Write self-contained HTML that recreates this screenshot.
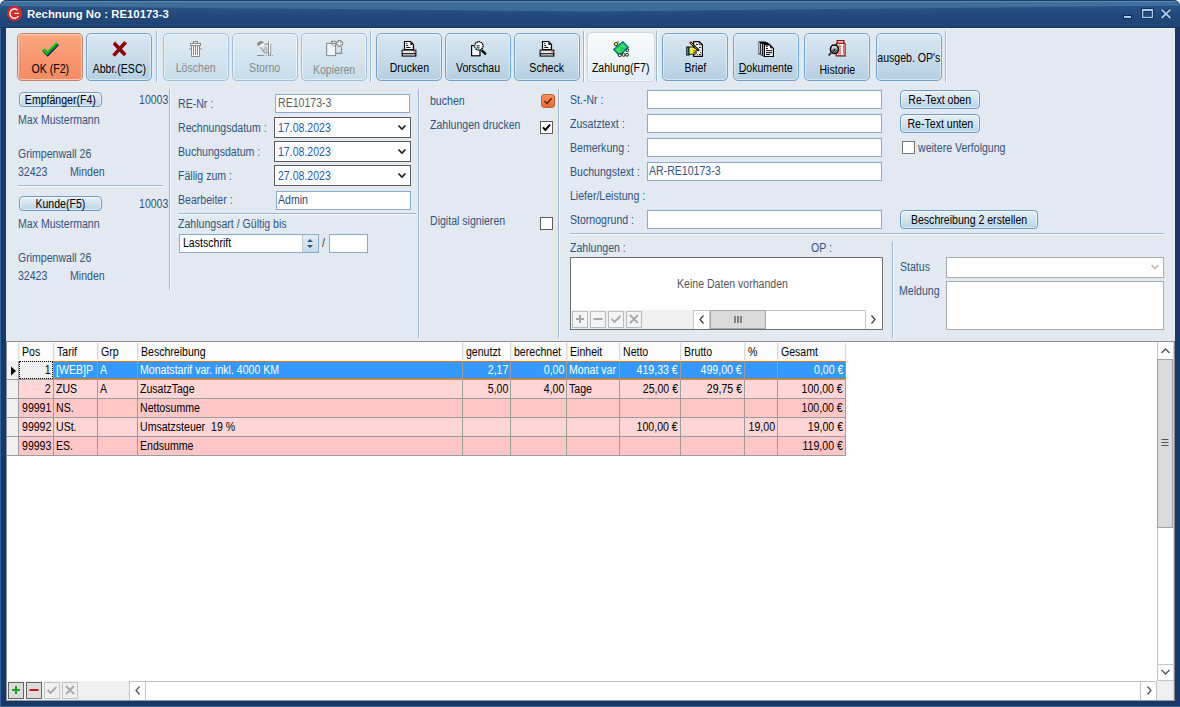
<!DOCTYPE html>
<html><head><meta charset="utf-8"><style>
*{margin:0;padding:0;box-sizing:border-box}
html{background:#fff}body{width:1180px;height:707px;overflow:hidden;background:#1a3866;border-radius:6px 6px 0 0}
body{position:relative;font-family:"Liberation Sans",sans-serif;font-size:11px;line-height:13px;color:#000}
.a{position:absolute}
.t{position:absolute;white-space:nowrap;font-size:12px;line-height:13px;transform:scaleX(.88);transform-origin:0 0}
.tr{transform-origin:100% 0}
.sx{display:inline-block;transform:scaleX(.88);white-space:nowrap}
.lb{color:#30547f}
#title{left:0;top:0;width:1180px;height:28px;background:linear-gradient(#1c3c6a 0,#1c3c6a 1px,#2d598b 1px,#22497c 16px,#1e4374 27px,#143562 27px);border-radius:6px 6px 0 0}
#glass{left:0;top:1px;width:1180px;height:11px;background:linear-gradient(#5b8ab6 0,#5b8ab6 1px,#416f9d 1px,#3b6a9c 10px);clip-path:polygon(0 0,100% 0,100% 4.6px,50% 10.5px,0 5px);border-radius:6px 6px 0 0}
.tb.ok{border-color:#c48068;background:linear-gradient(#fba880,#f99872 50%,#f48b62)}
.tb.hot{top:32px;height:50px;width:68px;border-color:#c9dae6;background:linear-gradient(#f8fbfc,#eef4f8 50%,#e2ecf3)}
#client{left:6px;top:28px;width:1169px;height:673px;background:#e2e9f1;border-top:1px solid #eef2f7}
.tb{position:absolute;top:33px;width:66px;height:48px;border:1px solid #72a0c7;border-radius:5px;background:linear-gradient(#d9e8f2,#c9dcea 50%,#b4cfe3);box-shadow:inset 0 0 0 1px rgba(255,255,255,.5)}
.tb .cap{position:absolute;left:-4px;right:-4px;top:27px;text-align:center;color:#000;font-size:12px}
.tb.dis{border-color:#9dbfd9;background:linear-gradient(#dfecf4,#d4e5ef 50%,#c6dcea)}
.tb.dis .cap{color:#8a8a8a}
.tb svg{position:absolute;left:0;top:0}
.sep{position:absolute;top:31px;width:2px;height:51px;border-left:1px solid #9bb7d4;border-right:1px solid #fafcfd}
.btn{position:absolute;font-size:12px;border:1px solid #6f9ac2;border-radius:4px;background:linear-gradient(#e6f0f7,#d3e4f0 45%,#bad4e7);box-shadow:inset 0 0 0 1px rgba(255,255,255,.5);text-align:center;color:#000}
.vl{position:absolute;width:2px;border-left:1px solid #9db6d1;border-right:1px solid #f7f9fb}
.hl{position:absolute;height:2px;border-top:1px solid #9db6d1;border-bottom:1px solid #f7f9fb}
.inp{position:absolute;background:#fff;border:1px solid #89abcb}
.cmb{position:absolute;background:#fff;border:1px solid #5b5b5b}
.chk{position:absolute;width:13px;height:13px;background:#fff;border:1px solid #5e5e5e}
</style></head><body>
<div id="title" class="a"></div>
<div id="glass" class="a"></div>
<div id="client" class="a"></div>
<div class="tb ok" style="left:17px"><div class="cap" style="top:28.5px"><span class="sx">OK (F2)</span></div></div>
<div class="tb " style="left:86px"><div class="cap" style="top:28.5px"><span class="sx">Abbr.(ESC)</span></div></div>
<div class="tb dis" style="left:163px"><div class="cap" style="top:27.5px"><span class="sx">Löschen</span></div></div>
<div class="tb dis" style="left:232px"><div class="cap" style="top:27.5px"><span class="sx">Storno</span></div></div>
<div class="tb dis" style="left:301px"><div class="cap" style="top:29.5px"><span class="sx">Kopieren</span></div></div>
<div class="tb " style="left:376px"><div class="cap" style="top:27.5px"><span class="sx">Drucken</span></div></div>
<div class="tb " style="left:445px"><div class="cap" style="top:27.5px"><span class="sx">Vorschau</span></div></div>
<div class="tb " style="left:514px"><div class="cap" style="top:27.5px"><span class="sx">Scheck</span></div></div>
<div class="tb hot" style="left:587px"><div class="cap" style="top:28.5px"><span class="sx">Zahlung(F7)</span></div></div>
<div class="tb " style="left:662px"><div class="cap" style="top:27.5px"><span class="sx">Brief</span></div></div>
<div class="tb " style="left:733px"><div class="cap" style="top:27.5px"><span class="sx"><u>D</u>okumente</span></div></div>
<div class="tb " style="left:804px"><div class="cap" style="top:29.5px"><span class="sx">Historie</span></div></div>
<div class="tb " style="left:876px"><div class="cap" style="top:17.5px"><span class="sx">ausgeb. OP's</span></div></div>
<div class="sep" style="left:156px"></div>
<div class="sep" style="left:370px"></div>
<div class="sep" style="left:583px"></div>
<div class="sep" style="left:656px"></div>
<div class="sep" style="left:945px"></div>
<svg class="a" style="left:6px;top:5px" width="17" height="17" viewBox="0 0 17 17">
<circle cx="8.5" cy="8.5" r="7.6" fill="#e42424"/>
<path d="M11.6 5.2 A4.6 4.6 0 1 0 12.4 11" fill="none" stroke="#fff" stroke-width="1.4"/>
<path d="M8.3 8.4 H13" stroke="#fff" stroke-width="1.3"/>
</svg>
<div class="t " style="left:27px;top:7.5px;color:#fff;font-weight:bold;font-size:11.4px;transform:none;text-shadow:0 0 1px #0d2a52">Rechnung No : RE10173-3</div>
<svg class="a" style="left:1120px;top:6px" width="56" height="16" viewBox="0 0 56 16">
<rect x="3" y="9" width="9" height="4" fill="#0c2344" opacity="0.85"/>
<rect x="4" y="10" width="7" height="2" fill="#a8cdee"/>
<rect x="21.5" y="2.5" width="12" height="10" fill="none" stroke="#0c2344" stroke-width="1" opacity="0.8"/>
<rect x="24" y="5.6" width="7" height="4.8" fill="none" stroke="#0c2344" stroke-width="0.8" opacity="0.8"/>
<rect x="22.6" y="3.6" width="9.8" height="7.8" fill="none" stroke="#a8cdee" stroke-width="1.3"/>
<rect x="22" y="3" width="11" height="2" fill="#a8cdee"/>
<path d="M41.6 3.6 L50.4 12 M50.4 3.6 L41.6 12" stroke="#0c2344" stroke-width="3.6" opacity="0.85"/>
<path d="M41.6 3.6 L50.4 12 M50.4 3.6 L41.6 12" stroke="#a8cdee" stroke-width="2"/>
</svg>
<svg class="a" style="left:41px;top:40px" width="18" height="18" viewBox="0 0 18 18"><path d="M2.2 9.6 L6 13.6 L16.2 3.4" fill="none" stroke="#000080" stroke-width="3.2" transform="translate(0.6,0.8)"/>
<path d="M2.2 9.6 L6 13.6 L16.2 3.4" fill="none" stroke="#00a010" stroke-width="3"/>
<path d="M1.6 8.8 L5.9 13 M5.9 12.6 L15.8 2.6" fill="none" stroke="#10ff20" stroke-width="1"/></svg>
<svg class="a" style="left:111px;top:40px" width="18" height="18" viewBox="0 0 18 18"><path d="M3.2 3.2 L14.2 15 M14.6 2.2 L2.6 15.6" fill="none" stroke="#860000" stroke-width="3.6"/>
<path d="M2.2 3.6 L5 1.6 M12.6 2.2 L15.6 3.2 M1.6 14.6 L3.4 12.4" fill="none" stroke="#ff0000" stroke-width="1"/></svg>
<svg class="a" style="left:188px;top:40px" width="17" height="17" viewBox="0 0 17 17"><rect x="4" y="6" width="7" height="10" fill="#fff"/>
<rect x="3" y="4" width="9" height="1" fill="#fff"/>
<g fill="none" stroke="#8a8a8a" stroke-width="1">
<rect x="5.5" y="1.5" width="4" height="2"/>
<rect x="2.5" y="3.5" width="10" height="2"/>
<path d="M3.5 5.5 V16.5 H11.5 V5.5"/>
<path d="M5.5 6 V15 M7.5 6 V15 M9.5 6 V15"/>
<path d="M1 9.5 L2.8 8.3 M12.2 8.3 L14 9.5"/>
</g></svg>
<svg class="a" style="left:256px;top:40px" width="17" height="17" viewBox="0 0 17 17"><path d="M1.1 3 L4 1 L7 1.3 L8.2 3.2 L5.2 6 L2.8 6.4 L1 4.6 Z" fill="#8e8e8e"/>
<path d="M3.4 6.4 L8.2 3.4" stroke="#fff" stroke-width="1.8"/>
<g fill="none" stroke="#8e8e8e" stroke-width="1">
<path d="M8.4 4.1 H12.4"/>
<path d="M4.2 7.2 L8.4 12.6 L10.2 13.2 L12.2 11.8"/>
<path d="M8.8 6.4 L11.8 9.4 M7.8 8.2 L11 11.4 M6.8 10 L8.6 11.6"/>
<path d="M12.5 1.2 V15.5 H14.7 V3.6"/>
<path d="M1 15.5 H8.2 M9.8 15.5 H10.6 M16 15.5 H16.8"/>
</g>
<rect x="13" y="1.6" width="1.2" height="11" fill="#fff"/></svg>
<svg class="a" style="left:326px;top:40px" width="18" height="17" viewBox="0 0 18 17"><g fill="none" stroke="#8c8c8c" stroke-width="1.1">
<path d="M5.4 3.4 V1.4 H9.8"/>
<path d="M15.6 7 V13.4 H9.6"/>
<rect x="0.6" y="3.4" width="9" height="12.2" fill="#eef4f8"/>
<path d="M5.8 4.2 L8.8 6.6" stroke-width="1"/>
<path d="M12.2 0.6 H14.8 V2.1 H16.6 V4.7 H14.8 V6.4 H12.2 V4.7 H10.4 V2.1 H12.2 Z" fill="#fff"/>
</g></svg>
<svg class="a" style="left:401px;top:41px" width="16" height="16" viewBox="0 0 16 16"><path d="M3.5 0.5 H9.5 L12.5 3.5 V8.5 H3.5 Z" fill="#fff" stroke="#000" stroke-width="1.2"/>
<path d="M5.2 2.4 H6.4 M5.2 4.4 H7.2 M5.2 6.4 H9.4 M11 6.4 H11.4 M9.8 1.8 V3.4 H11.4" stroke="#000" stroke-width="1"/>
<rect x="0.6" y="8.6" width="14.8" height="7" fill="#000"/>
<rect x="1.6" y="9.6" width="12.8" height="2.6" fill="#f4f4f4"/>
<path d="M2 10.9 H13.6" stroke="#c8c8c8" stroke-width="1" stroke-dasharray="1 1"/>
<rect x="1.8" y="13.2" width="12.4" height="1.4" fill="#d4d4d4"/>
<rect x="12.6" y="10.2" width="1.2" height="1.2" fill="#ff0000"/></svg>
<svg class="a" style="left:471px;top:41px" width="16" height="16" viewBox="0 0 16 16"><rect x="0.6" y="4.6" width="8.4" height="10.2" fill="#fff" stroke="#000" stroke-width="1.2"/>
<circle cx="7.8" cy="4.9" r="4.2" fill="#fff" stroke="#000" stroke-width="1.3" stroke-dasharray="1.6 0.5"/>
<path d="M5.6 4.9 H8.6 M5.6 6.9 H8.6" stroke="#000" stroke-width="1"/>
<path d="M3.6 4.4 L5 3.4 M3.6 6.8 L5 7.8" stroke="#00dede" stroke-width="1.2"/>
<path d="M10.6 9.1 L14.9 13.4" stroke="#000" stroke-width="2.4"/></svg>
<svg class="a" style="left:539px;top:41px" width="16" height="16" viewBox="0 0 16 16"><path d="M3.5 0.5 H9.5 L12.5 3.5 V8.5 H3.5 Z" fill="#fff" stroke="#000" stroke-width="1.2"/>
<path d="M5.2 2.4 H6.4 M5.2 4.4 H7.2 M5.2 6.4 H9.4 M11 6.4 H11.4 M9.8 1.8 V3.4 H11.4" stroke="#000" stroke-width="1"/>
<rect x="0.6" y="8.6" width="14.8" height="7" fill="#000"/>
<rect x="1.6" y="9.6" width="12.8" height="2.6" fill="#f4f4f4"/>
<path d="M2 10.9 H13.6" stroke="#c8c8c8" stroke-width="1" stroke-dasharray="1 1"/>
<rect x="1.8" y="13.2" width="12.4" height="1.4" fill="#d4d4d4"/>
<rect x="12.6" y="10.2" width="1.2" height="1.2" fill="#ff0000"/></svg>
<svg class="a" style="left:613px;top:41px" width="16" height="16" viewBox="0 0 16 16"><polygon points="0.6,8.4 9.8,0.6 15.4,6.2 6.4,14.6" fill="#10b890" stroke="#006e6e" stroke-width="1.1"/>
<polygon points="2.6,8.4 9.8,2.4 13.4,6.2 6.4,12.6" fill="#36e65a"/>
<path d="M4 8 L9.6 3.4 M6.6 11 L12 6.4" stroke="#10a0a0" stroke-width="0.6" stroke-dasharray="0.8 0.8"/>
<circle cx="8.6" cy="7.4" r="1.6" fill="#20c040"/>
<circle cx="3" cy="3.2" r="1.7" fill="#ffff50" stroke="#000" stroke-width="0.8"/>
<path d="M4.6 0.6 H6.4 M4.6 1.8 H6.4" stroke="#000" stroke-width="0.9" stroke-dasharray="0.9 0.9"/>
<circle cx="6.8" cy="14.2" r="1.5" fill="#e6e6e6" stroke="#000" stroke-width="0.8"/>
<circle cx="10.6" cy="13.9" r="1.5" fill="#ffff50" stroke="#000" stroke-width="0.8"/>
<circle cx="14" cy="13.8" r="1.5" fill="#e6e6e6" stroke="#000" stroke-width="0.8"/>
<circle cx="14.4" cy="9.2" r="1.4" fill="#f4f4f4" stroke="#000" stroke-width="0.9"/></svg>
<svg class="a" style="left:686px;top:41px" width="17" height="16" viewBox="0 0 17 16"><path d="M7.6 0.6 H13.2 L16.4 3.8 V15.4 H7.6 Z" fill="#fff" stroke="#000" stroke-width="1.2"/>
<path d="M13.2 0.8 V3.8 H16.2" fill="none" stroke="#000" stroke-width="0.7"/>
<path d="M10 3.4 H12 M13 6.4 H14.8 M11 13.6 H11.8 M13 13.6 H14.8 M14 11.4 H14.8" stroke="#000" stroke-width="1"/>
<path d="M4.4 1.4 L13.2 9.8" stroke="#000" stroke-width="2.2"/>
<path d="M5 2 L12.6 9.2" stroke="#f8f000" stroke-width="1" stroke-dasharray="1 0.8"/>
<rect x="3.4" y="0.6" width="1.6" height="1.6" fill="#ff0000"/>
<rect x="0.8" y="6" width="2.2" height="8" fill="#10e0f0" stroke="#000" stroke-width="1"/>
<path d="M3 6.6 C4 5.8 6 5.6 7.2 6.2 L11 8.6 L11.6 9.6 L9.6 10 L10.6 11.8 L9.4 13.2 L3 13.2 Z" fill="#f8f000" stroke="#000" stroke-width="0.9"/>
<path d="M4.2 8 H5 M6 8 H6.8 M4.6 9.4 H5.4 M5.4 10.8 H6.2 M4.2 12 H5 M7 11.2 H9.6 M6.8 9.8 H9" stroke="#fffff0" stroke-width="0.8"/>
<path d="M7 9.8 H9.4 M7.2 11.6 H10" stroke="#000" stroke-width="0.7"/></svg>
<svg class="a" style="left:758px;top:41px" width="16" height="16" viewBox="0 0 16 16"><path d="M0.6 0.6 H7.5 L8 1.3 H9.4 L10.2 2.2 H11 L13.4 4.8 H7.2 V15.4 H5.2 L4.4 14.6 H3.2 L2.6 13.4 H0.6 Z" fill="#000"/>
<path d="M1.7 1.6 V12.6 M3.6 2.6 V13.6 M5.6 3.4 V14.6" stroke="#fff" stroke-width="0.9"/>
<path d="M6.4 4 H12 L15.4 7.4 V15.6 H6.4 Z" fill="#fff" stroke="#000" stroke-width="1.2"/>
<path d="M8 5.6 H9.6 M8 7.6 H10 M8 9.7 H14 M8 11.7 H14 M8 13.6 H12" stroke="#000" stroke-width="1"/>
<path d="M12.6 4.6 V6.8 H15" stroke="#000" stroke-width="1" fill="none"/></svg>
<svg class="a" style="left:828px;top:40px" width="18" height="17" viewBox="0 0 18 17"><path d="M9 3 L8.2 4 V15.8 H17.2 V4 L16.4 3 Z" fill="#fff" stroke="#a00000" stroke-width="1.2"/>
<rect x="9.2" y="0.6" width="6.6" height="2.6" fill="#fff" stroke="#a00000" stroke-width="1.2"/>
<path d="M10.4 1.9 H14.6" stroke="#b0b0b0" stroke-width="0.9"/>
<g fill="#c01818">
<rect x="9.2" y="4.6" width="1" height="1"/><rect x="11.2" y="4.6" width="1" height="1"/><rect x="10.2" y="5.6" width="1" height="1"/><rect x="12.2" y="5.6" width="1" height="1"/>
<rect x="9.2" y="6.6" width="1" height="1"/><rect x="11.2" y="6.6" width="1" height="1"/><rect x="10.2" y="7.6" width="1" height="1"/><rect x="12.2" y="7.6" width="1" height="1"/>
<rect x="9.2" y="8.6" width="1" height="1"/><rect x="11.2" y="8.6" width="1" height="1"/><rect x="10.2" y="9.6" width="1" height="1"/><rect x="12.2" y="9.6" width="1" height="1"/>
<rect x="9.2" y="10.6" width="1" height="1"/><rect x="11.2" y="10.6" width="1" height="1"/><rect x="10.2" y="11.6" width="1" height="1"/><rect x="12.2" y="11.6" width="1" height="1"/>
<rect x="9.2" y="12.6" width="1" height="1"/><rect x="11.2" y="12.6" width="1" height="1"/><rect x="10.2" y="13.6" width="1" height="1"/><rect x="12.2" y="13.6" width="1" height="1"/>
<rect x="15" y="4.6" width="1" height="1"/><rect x="15.6" y="5.6" width="1" height="1"/><rect x="15" y="6.6" width="1" height="1"/><rect x="15.6" y="7.6" width="1" height="1"/>
<rect x="15" y="8.6" width="1" height="1"/><rect x="15.6" y="9.6" width="1" height="1"/><rect x="15" y="10.6" width="1" height="1"/><rect x="15.6" y="11.6" width="1" height="1"/>
<rect x="15" y="12.6" width="1" height="1"/><rect x="15.6" y="13.6" width="1" height="1"/>
</g>
<path d="M17.6 4.4 V16.4 H9" fill="none" stroke="#7a7a7a" stroke-width="0.7"/>
<ellipse cx="6.4" cy="9.2" rx="4" ry="4.2" fill="#b8b8b8" stroke="#000" stroke-width="1.5"/>
<path d="M4 7.4 C5 6.4 7 6.4 8.4 7.6" fill="none" stroke="#fff" stroke-width="0.9"/>
<path d="M4.6 11.6 L7.6 8.6 M6.4 12.4 L8.6 10" stroke="#000" stroke-width="1"/>
<path d="M0.6 15.4 L6.8 9.2" stroke="#000" stroke-width="1.5"/>
<path d="M1.8 14.2 L5.8 10.2" stroke="#fff" stroke-width="0.7" stroke-dasharray="0.7 0.9"/></svg>
<div class="btn" style="left:19px;top:92px;width:83px;height:15px;line-height:15px;"><span class="sx">Empfänger(F4)</span></div>
<div class="t tr lb" style="right:1012px;top:93.5px;">10003</div>
<div class="t lb" style="left:18px;top:114px;">Max Mustermann</div>
<div class="t lb" style="left:18px;top:147.5px;">Grimpenwall 26</div>
<div class="t lb" style="left:18px;top:165.5px;">32423</div>
<div class="t lb" style="left:70px;top:165.5px;">Minden</div>
<div class="btn" style="left:19px;top:196px;width:83px;height:15px;line-height:15px;"><span class="sx">Kunde(F5)</span></div>
<div class="t tr lb" style="right:1012px;top:197.5px;">10003</div>
<div class="t lb" style="left:18px;top:218px;">Max Mustermann</div>
<div class="t lb" style="left:18px;top:251.5px;">Grimpenwall 26</div>
<div class="t lb" style="left:18px;top:269.5px;">32423</div>
<div class="t lb" style="left:70px;top:269.5px;">Minden</div>
<div class="hl" style="left:18px;top:185px;width:145px"></div>
<div class="vl" style="left:169px;top:89px;height:201px"></div>
<div class="t lb" style="left:178px;top:98.4px;">RE-Nr :</div>
<div class="inp" style="left:275px;top:94px;width:135px;height:19px;"></div>
<div class="t " style="left:278px;top:96.7px;color:#5c5c5c">RE10173-3</div>
<div class="t lb" style="left:178px;top:122.2px;">Rechnungsdatum :</div>
<div class="cmb" style="left:274px;top:117px;width:137px;height:21px;"></div>
<div class="t " style="left:278px;top:121.6px;color:#1d5aa8">17.08.2023</div>
<svg class="a" style="left:397px;top:124px" width="10" height="7" viewBox="0 0 10 7"><path d="M1.5 1.5 L5 5 L8.5 1.5" fill="none" stroke="#1a1a1a" stroke-width="1.6"/></svg>
<div class="t lb" style="left:178px;top:146.2px;">Buchungsdatum :</div>
<div class="cmb" style="left:274px;top:141px;width:137px;height:21px;"></div>
<div class="t " style="left:278px;top:145.6px;color:#1d5aa8">17.08.2023</div>
<svg class="a" style="left:397px;top:148px" width="10" height="7" viewBox="0 0 10 7"><path d="M1.5 1.5 L5 5 L8.5 1.5" fill="none" stroke="#1a1a1a" stroke-width="1.6"/></svg>
<div class="t lb" style="left:178px;top:170.2px;">Fällig zum :</div>
<div class="cmb" style="left:274px;top:165px;width:137px;height:21px;"></div>
<div class="t " style="left:278px;top:169.6px;color:#1d5aa8">27.08.2023</div>
<svg class="a" style="left:397px;top:172px" width="10" height="7" viewBox="0 0 10 7"><path d="M1.5 1.5 L5 5 L8.5 1.5" fill="none" stroke="#1a1a1a" stroke-width="1.6"/></svg>
<div class="t lb" style="left:178px;top:194.2px;">Bearbeiter :</div>
<div class="inp" style="left:276px;top:191px;width:135px;height:19px;"></div>
<div class="t " style="left:278px;top:194px;color:#2c4a74">Admin</div>
<div class="hl" style="left:178px;top:213px;width:238px"></div>
<div class="t lb" style="left:178px;top:218.4px;">Zahlungsart / Gültig bis</div>
<div class="inp" style="left:179px;top:234px;width:140px;height:19px;"></div>
<div class="a" style="left:302px;top:235px;width:16px;height:17px;background:linear-gradient(#e6eef5,#c9dae8);border-left:1px solid #b7cadb"></div>
<svg class="a" style="left:305px;top:237px" width="10" height="13" viewBox="0 0 10 13"><path d="M2 5 L5 2 L8 5 Z M2 8 L5 11 L8 8 Z" fill="#2f5581"/></svg>
<div class="t " style="left:183px;top:237px;color:#000">Lastschrift</div>
<div class="t " style="left:322px;top:237px;color:#333">/</div>
<div class="inp" style="left:329px;top:234px;width:39px;height:19px;"></div>
<div class="vl" style="left:418px;top:89px;height:249px"></div>
<div class="t lb" style="left:430px;top:94.7px;">buchen</div>
<div class="a" style="left:541px;top:94px;width:14px;height:14px;border-radius:3px;background:linear-gradient(#f8915a,#ec6a32);border:1px solid #c0602e"></div>
<svg class="a" style="left:543px;top:96px" width="10" height="10" viewBox="0 0 10 10"><path d="M1.5 5 L4 7.6 L8.6 2.2" fill="none" stroke="#5a2a10" stroke-width="1.6"/></svg>
<div class="t lb" style="left:430px;top:118.8px;">Zahlungen drucken</div>
<div class="chk" style="left:540px;top:121px"></div>
<svg class="a" style="left:541px;top:122px" width="11" height="11" viewBox="0 0 11 11"><path d="M2 5.4 L4.4 8 L9 2.6" fill="none" stroke="#000" stroke-width="2"/></svg>
<div class="t lb" style="left:430px;top:214.7px;">Digital signieren</div>
<div class="chk" style="left:540px;top:217px"></div>
<div class="vl" style="left:558px;top:89px;height:249px"></div>
<div class="t lb" style="left:570px;top:93.6px;">St.-Nr :</div>
<div class="t lb" style="left:570px;top:117.7px;">Zusatztext :</div>
<div class="t lb" style="left:570px;top:141.7px;">Bemerkung :</div>
<div class="t lb" style="left:570px;top:165.7px;">Buchungstext :</div>
<div class="t lb" style="left:570px;top:190px;">Liefer/Leistung :</div>
<div class="t lb" style="left:570px;top:213.5px;">Stornogrund :</div>
<div class="inp" style="left:647px;top:90px;width:235px;height:19px;"></div>
<div class="inp" style="left:647px;top:114px;width:235px;height:19px;"></div>
<div class="inp" style="left:647px;top:138px;width:235px;height:19px;"></div>
<div class="inp" style="left:647px;top:162px;width:235px;height:19px;"></div>
<div class="inp" style="left:647px;top:210px;width:235px;height:19px;"></div>
<div class="t " style="left:649px;top:165px;color:#2f5382">AR-RE10173-3</div>
<div class="btn" style="left:900px;top:90px;width:80px;height:19px;line-height:19px;"><span class="sx">Re-Text oben</span></div>
<div class="btn" style="left:900px;top:114px;width:80px;height:19px;line-height:19px;"><span class="sx">Re-Text unten</span></div>
<div class="chk" style="left:902px;top:141px;border-color:#777"></div>
<div class="t lb" style="left:918px;top:142.3px;">weitere Verfolgung</div>
<div class="btn" style="left:900px;top:210px;width:138px;height:19px;line-height:19px;"><span class="sx">Beschreibung 2 erstellen</span></div>
<div class="hl" style="left:570px;top:233px;width:594px"></div>
<div class="t lb" style="left:570px;top:241.6px;">Zahlungen :</div>
<div class="t lb" style="left:811px;top:241.5px;">OP :</div>
<div class="vl" style="left:892px;top:241px;height:97px"></div>
<div class="a" style="left:570px;top:257px;width:313px;height:73px;background:#fff;border:1px solid #6c7178"></div>
<div class="t " style="left:677px;top:278.4px;color:#555">Keine Daten vorhanden</div>
<div class="a" style="left:571px;top:310px;width:122px;height:19px;background:#f0f0f0"></div>
<div class="a" style="left:572px;top:311px;width:16px;height:17px;border:1px solid #b4bcc4;background:#f4f4f4"></div>
<svg class="a" style="left:573px;top:312px" width="14" height="14" viewBox="0 0 14 14"><path d="M7 3 V11 M3 7 H11" stroke="#a8a8a8" stroke-width="2"/></svg>
<div class="a" style="left:590px;top:311px;width:16px;height:17px;border:1px solid #b4bcc4;background:#f4f4f4"></div>
<svg class="a" style="left:591px;top:312px" width="14" height="14" viewBox="0 0 14 14"><path d="M2.5 7 H11.5" stroke="#a8a8a8" stroke-width="2"/></svg>
<div class="a" style="left:608px;top:311px;width:16px;height:17px;border:1px solid #b4bcc4;background:#f4f4f4"></div>
<svg class="a" style="left:609px;top:312px" width="14" height="14" viewBox="0 0 14 14"><path d="M2.6 7 L5.6 10 L11.4 4" fill="none" stroke="#a8a8a8" stroke-width="1.8"/></svg>
<div class="a" style="left:626px;top:311px;width:16px;height:17px;border:1px solid #b4bcc4;background:#f4f4f4"></div>
<svg class="a" style="left:627px;top:312px" width="14" height="14" viewBox="0 0 14 14"><path d="M3 3 L11 11 M11 3 L3 11" stroke="#a8a8a8" stroke-width="1.8"/></svg>
<div class="a" style="left:693px;top:310px;width:189px;height:19px;background:#fff;border-top:1px solid #c8c8c8"></div>
<div class="a" style="left:693px;top:310px;width:17px;height:19px;border:1px solid #c8c8c8;border-bottom:0;background:#fff"></div>
<div class="a" style="left:710px;top:310px;width:56px;height:19px;border:1px solid #a8a8a8;background:#dadada"></div>
<div class="a" style="left:865px;top:310px;width:17px;height:19px;border-left:1px solid #c8c8c8;background:#fff"></div>
<svg class="a" style="left:697px;top:314px" width="10" height="11" viewBox="0 0 10 11"><path d="M6.5 1.5 L3 5.5 L6.5 9.5" fill="none" stroke="#444" stroke-width="1.3"/></svg>
<svg class="a" style="left:868px;top:314px" width="10" height="11" viewBox="0 0 10 11"><path d="M3.5 1.5 L7 5.5 L3.5 9.5" fill="none" stroke="#444" stroke-width="1.3"/></svg>
<svg class="a" style="left:733px;top:315px" width="10" height="9" viewBox="0 0 10 9"><path d="M2 1 V8 M5 1 V8 M8 1 V8" stroke="#555" stroke-width="1.3"/></svg>
<div class="t lb" style="left:900px;top:261.4px;">Status</div>
<div class="a" style="left:946px;top:257px;width:218px;height:21px;background:#fff;border:1px solid #ababab"></div>
<svg class="a" style="left:1150px;top:263px" width="10" height="8" viewBox="0 0 10 8"><path d="M1.5 2 L5 5.6 L8.5 2" fill="none" stroke="#b6b6b6" stroke-width="1.5"/></svg>
<div class="t lb" style="left:899px;top:285px;">Meldung</div>
<div class="a" style="left:946px;top:281px;width:218px;height:49px;background:#fff;border:1px solid #ababab"></div>
<div class="a" style="left:0;top:28px;width:1px;height:679px;background:#33649a"></div>
<div class="a" style="left:0;top:706px;width:1180px;height:1px;background:#33649a"></div>
<div class="a" style="left:6px;top:341px;width:1169px;height:360px;background:#fff;border-top:1px solid #8f8f8f;border-left:1px solid #909090;border-right:1px solid #8a8a8a;border-bottom:1px solid #9a9a9a"></div>
<div class="a" style="left:1173px;top:342px;width:1px;height:358px;background:#d0d0d0"></div>
<div class="a" style="left:7px;top:342px;width:839px;height:19px;background:#fcfcfc"></div>
<div class="a" style="left:18px;top:343px;width:2px;height:17px;border-left:1px solid #dadada;border-right:1px solid #eeeeee"></div>
<div class="a" style="left:53px;top:343px;width:2px;height:17px;border-left:1px solid #dadada;border-right:1px solid #eeeeee"></div>
<div class="a" style="left:97px;top:343px;width:2px;height:17px;border-left:1px solid #dadada;border-right:1px solid #eeeeee"></div>
<div class="a" style="left:137px;top:343px;width:2px;height:17px;border-left:1px solid #dadada;border-right:1px solid #eeeeee"></div>
<div class="a" style="left:462px;top:343px;width:2px;height:17px;border-left:1px solid #dadada;border-right:1px solid #eeeeee"></div>
<div class="a" style="left:510px;top:343px;width:2px;height:17px;border-left:1px solid #dadada;border-right:1px solid #eeeeee"></div>
<div class="a" style="left:566px;top:343px;width:2px;height:17px;border-left:1px solid #dadada;border-right:1px solid #eeeeee"></div>
<div class="a" style="left:619px;top:343px;width:2px;height:17px;border-left:1px solid #dadada;border-right:1px solid #eeeeee"></div>
<div class="a" style="left:680px;top:343px;width:2px;height:17px;border-left:1px solid #dadada;border-right:1px solid #eeeeee"></div>
<div class="a" style="left:744px;top:343px;width:2px;height:17px;border-left:1px solid #dadada;border-right:1px solid #eeeeee"></div>
<div class="a" style="left:777px;top:343px;width:2px;height:17px;border-left:1px solid #dadada;border-right:1px solid #eeeeee"></div>
<div class="a" style="left:845px;top:343px;width:2px;height:17px;border-left:1px solid #dadada;border-right:1px solid #eeeeee"></div>
<div class="t " style="left:22px;top:346px;color:#000">Pos</div>
<div class="t " style="left:57px;top:346px;color:#000">Tarif</div>
<div class="t " style="left:101px;top:346px;color:#000">Grp</div>
<div class="t " style="left:141px;top:346px;color:#000">Beschreibung</div>
<div class="t " style="left:466px;top:346px;color:#000">genutzt</div>
<div class="t " style="left:514px;top:346px;color:#000">berechnet</div>
<div class="t " style="left:570px;top:346px;color:#000">Einheit</div>
<div class="t " style="left:623px;top:346px;color:#000">Netto</div>
<div class="t " style="left:684px;top:346px;color:#000">Brutto</div>
<div class="t " style="left:748px;top:346px;color:#000">%</div>
<div class="t " style="left:781px;top:346px;color:#000">Gesamt</div>
<div class="a" style="left:7px;top:361px;width:11px;height:18px;background:#efefef"></div>
<div class="a" style="left:19px;top:361px;width:826px;height:18px;background:#3399ff"></div>
<div class="a" style="left:7px;top:379px;width:839px;height:1px;background:#9c9c9c"></div>
<div class="a" style="left:19px;top:361px;width:34px;height:18px;background:#efefef;border:1px dotted #000"></div>
<div class="a" style="left:54px;top:361px;width:791px;height:18px;border-top:1px dotted #e07a1a;border-bottom:1px dotted #e07a1a"></div>
<svg class="a" style="left:10px;top:366px" width="7" height="10" viewBox="0 0 7 10"><path d="M1 0.5 L6 5 L1 9.5 Z" fill="#000"/></svg>
<div class="t tr " style="right:1129px;top:364px;color:#000">1</div>
<div class="t " style="left:56px;top:364px;color:#fff">[WEB]P</div>
<div class="t " style="left:100px;top:364px;color:#fff">A</div>
<div class="t " style="left:140px;top:364px;color:#fff">Monatstarif var. inkl. 4000 KM</div>
<div class="t tr " style="right:672px;top:364px;color:#fff">2,17</div>
<div class="t tr " style="right:616px;top:364px;color:#fff">0,00</div>
<div class="t " style="left:569px;top:364px;color:#fff">Monat var</div>
<div class="t tr " style="right:502px;top:364px;color:#fff">419,33 €</div>
<div class="t tr " style="right:438px;top:364px;color:#fff">499,00 €</div>
<div class="t tr " style="right:337px;top:364px;color:#fff">0,00 €</div>
<div class="a" style="left:7px;top:380px;width:11px;height:18px;background:#efefef"></div>
<div class="a" style="left:19px;top:380px;width:826px;height:18px;background:#ffd5d5"></div>
<div class="a" style="left:7px;top:398px;width:839px;height:1px;background:#9c9c9c"></div>
<div class="t tr " style="right:1129px;top:383px;color:#000">2</div>
<div class="t " style="left:56px;top:383px;color:#000">ZUS</div>
<div class="t " style="left:100px;top:383px;color:#000">A</div>
<div class="t " style="left:140px;top:383px;color:#000">ZusatzTage</div>
<div class="t tr " style="right:672px;top:383px;color:#000">5,00</div>
<div class="t tr " style="right:616px;top:383px;color:#000">4,00</div>
<div class="t " style="left:569px;top:383px;color:#000">Tage</div>
<div class="t tr " style="right:502px;top:383px;color:#000">25,00 €</div>
<div class="t tr " style="right:438px;top:383px;color:#000">29,75 €</div>
<div class="t tr " style="right:337px;top:383px;color:#000">100,00 €</div>
<div class="a" style="left:7px;top:399px;width:11px;height:18px;background:#efefef"></div>
<div class="a" style="left:19px;top:399px;width:826px;height:18px;background:#ffc6c6"></div>
<div class="a" style="left:7px;top:417px;width:839px;height:1px;background:#9c9c9c"></div>
<div class="t tr " style="right:1129px;top:402px;color:#000">99991</div>
<div class="t " style="left:56px;top:402px;color:#000">NS.</div>
<div class="t " style="left:140px;top:402px;color:#000">Nettosumme</div>
<div class="t tr " style="right:337px;top:402px;color:#000">100,00 €</div>
<div class="a" style="left:7px;top:418px;width:11px;height:18px;background:#efefef"></div>
<div class="a" style="left:19px;top:418px;width:826px;height:18px;background:#ffd5d5"></div>
<div class="a" style="left:7px;top:436px;width:839px;height:1px;background:#9c9c9c"></div>
<div class="t tr " style="right:1129px;top:421px;color:#000">99992</div>
<div class="t " style="left:56px;top:421px;color:#000">USt.</div>
<div class="t " style="left:140px;top:421px;color:#000">Umsatzsteuer&nbsp; 19 %</div>
<div class="t tr " style="right:502px;top:421px;color:#000">100,00 €</div>
<div class="t tr " style="right:405px;top:421px;color:#000">19,00</div>
<div class="t tr " style="right:337px;top:421px;color:#000">19,00 €</div>
<div class="a" style="left:7px;top:437px;width:11px;height:18px;background:#efefef"></div>
<div class="a" style="left:19px;top:437px;width:826px;height:18px;background:#ffc6c6"></div>
<div class="a" style="left:7px;top:455px;width:839px;height:1px;background:#9c9c9c"></div>
<div class="t tr " style="right:1129px;top:440px;color:#000">99993</div>
<div class="t " style="left:56px;top:440px;color:#000">ES.</div>
<div class="t " style="left:140px;top:440px;color:#000">Endsumme</div>
<div class="t tr " style="right:337px;top:440px;color:#000">119,00 €</div>
<div class="a" style="left:18px;top:361px;width:1px;height:95px;background:#9c9c9c"></div>
<div class="a" style="left:53px;top:361px;width:1px;height:95px;background:#9c9c9c"></div>
<div class="a" style="left:97px;top:361px;width:1px;height:95px;background:#9c9c9c"></div>
<div class="a" style="left:137px;top:361px;width:1px;height:95px;background:#9c9c9c"></div>
<div class="a" style="left:462px;top:361px;width:1px;height:95px;background:#9c9c9c"></div>
<div class="a" style="left:510px;top:361px;width:1px;height:95px;background:#9c9c9c"></div>
<div class="a" style="left:566px;top:361px;width:1px;height:95px;background:#9c9c9c"></div>
<div class="a" style="left:619px;top:361px;width:1px;height:95px;background:#9c9c9c"></div>
<div class="a" style="left:680px;top:361px;width:1px;height:95px;background:#9c9c9c"></div>
<div class="a" style="left:744px;top:361px;width:1px;height:95px;background:#9c9c9c"></div>
<div class="a" style="left:777px;top:361px;width:1px;height:95px;background:#9c9c9c"></div>
<div class="a" style="left:845px;top:361px;width:1px;height:95px;background:#9c9c9c"></div>
<div class="a" style="left:1157px;top:342px;width:16px;height:339px;background:#fff;border-left:1px solid #c4c4c4"></div>
<div class="a" style="left:1157px;top:359px;width:16px;height:169px;background:#dadada;border:1px solid #a2a2a2"></div>
<div class="a" style="left:1157px;top:664px;width:16px;height:17px;border-top:1px solid #c4c4c4;border-bottom:1px solid #c4c4c4"></div>
<svg class="a" style="left:1160px;top:346px" width="11" height="9" viewBox="0 0 11 9"><path d="M1.5 7 L5.5 3 L9.5 7" fill="none" stroke="#555" stroke-width="1.4"/></svg>
<svg class="a" style="left:1160px;top:668px" width="11" height="9" viewBox="0 0 11 9"><path d="M1.5 2 L5.5 6 L9.5 2" fill="none" stroke="#555" stroke-width="1.4"/></svg>
<svg class="a" style="left:1160px;top:438px" width="10" height="9" viewBox="0 0 10 9"><path d="M1.5 1.5 H8.5 M1.5 4.5 H8.5 M1.5 7.5 H8.5" stroke="#555" stroke-width="1.2"/></svg>
<div class="a" style="left:7px;top:681px;width:123px;height:19px;background:#f0f0f0"></div>
<div class="a" style="left:129px;top:681px;width:1028px;height:19px;background:#fff;border-top:1px solid #c4c4c4"></div>
<div class="a" style="left:129px;top:681px;width:17px;height:19px;border-left:1px solid #c4c4c4;border-right:1px solid #c4c4c4"></div>
<div class="a" style="left:1140px;top:681px;width:17px;height:19px;border-left:1px solid #c4c4c4;border-right:1px solid #c4c4c4"></div>
<div class="a" style="left:1157px;top:681px;width:16px;height:19px;background:#f0f0f0"></div>
<svg class="a" style="left:133px;top:685px" width="10" height="11" viewBox="0 0 10 11"><path d="M6.5 1.5 L3 5.5 L6.5 9.5" fill="none" stroke="#555" stroke-width="1.3"/></svg>
<svg class="a" style="left:1144px;top:685px" width="10" height="11" viewBox="0 0 10 11"><path d="M3.5 1.5 L7 5.5 L3.5 9.5" fill="none" stroke="#555" stroke-width="1.3"/></svg>
<div class="a" style="left:8px;top:682px;width:16px;height:17px;border:1.5px solid #646464;background:#dcdcdc"></div>
<svg class="a" style="left:9px;top:683px" width="14" height="14" viewBox="0 0 14 14"><path d="M7 3 V11 M3 7 H11" stroke="#1aa01a" stroke-width="2"/></svg>
<div class="a" style="left:26px;top:682px;width:16px;height:17px;border:1.5px solid #646464;background:#dcdcdc"></div>
<svg class="a" style="left:27px;top:683px" width="14" height="14" viewBox="0 0 14 14"><path d="M2.5 7 H11.5" stroke="#cc1414" stroke-width="2"/></svg>
<div class="a" style="left:44px;top:682px;width:16px;height:17px;border:1px solid #bcc4cc;background:#f0f0f0"></div>
<svg class="a" style="left:45px;top:683px" width="14" height="14" viewBox="0 0 14 14"><path d="M2.6 7 L5.6 10 L11.4 4" fill="none" stroke="#a8a8a8" stroke-width="1.8"/></svg>
<div class="a" style="left:62px;top:682px;width:16px;height:17px;border:1px solid #bcc4cc;background:#f0f0f0"></div>
<svg class="a" style="left:63px;top:683px" width="14" height="14" viewBox="0 0 14 14"><path d="M3 3 L11 11 M11 3 L3 11" stroke="#a8a8a8" stroke-width="1.8"/></svg>
</body></html>
